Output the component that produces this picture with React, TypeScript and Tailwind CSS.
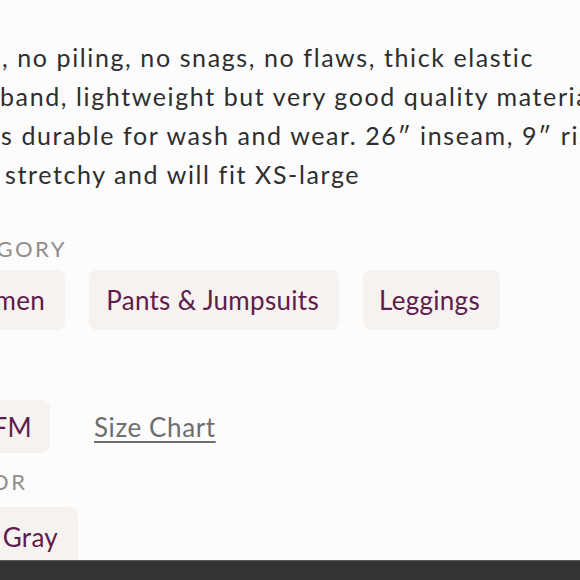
import React from "react";

const font = { fontFamily: "Lato, 'Noto Sans', sans-serif" };

function Label({ children, shift }: { children: React.ReactNode; shift: string }) {
  return (
    <div className={`${shift} text-[22px] leading-[22px] tracking-[2.5px] uppercase text-[#8e8e8e]`}>
      {children}
    </div>
  );
}

function Chip({ children, w, h = "h-[60px]" }: { children: React.ReactNode; w: string; h?: string }) {
  return (
    <div
      className={`${w} ${h} shrink-0 flex items-center justify-end pr-5 rounded-lg bg-[#f5f2ef] text-[26px] leading-none tracking-[0.3px] text-[#5f1c4c] whitespace-nowrap overflow-hidden`}
    >
      {children}
    </div>
  );
}

export default function App() {
  return (
    <div className="w-[580px] h-[580px] bg-[#fcfcfc] overflow-hidden relative" style={font}>
      <div className="ml-[-55px] w-[760px] pt-[38px]">
        <div className="text-[25px] leading-[39px] tracking-[1.6px] text-[#2e2e2e] whitespace-nowrap">
          <div className="pl-[57px]">, no piling, no snags, no flaws, thick elastic</div>
          <div className="pl-[55px]">band, lightweight but very good quality material and</div>
          <div className="pl-[56px]">s durable for wash and wear. 26″ inseam, 9″ rise</div>
          <div className="pl-[60px]">stretchy and will fit XS-large</div>
        </div>

        <div className="mt-[44px]">
          <Label shift="ml-[-12px]">Category</Label>
        </div>
        <div className="mt-[10px] flex gap-6">
          <Chip w="w-[120px]">Women</Chip>
          <Chip w="w-[250px]">Pants &amp; Jumpsuits</Chip>
          <Chip w="w-[137px]">Leggings</Chip>
        </div>

        <div className="mt-[37px]">
          <Label shift="ml-[-10px]">Size</Label>
        </div>
        <div className="mt-[11px] flex items-center">
          <Chip w="w-[105px]" h="h-[53px]">
            <span className="-mr-[2px]">OS FM</span>
          </Chip>
          <a className="ml-[44px] text-[26px] leading-none tracking-[0.6px] text-[#6e6e6e] underline underline-offset-[4px] decoration-[1.5px]">
            Size Chart
          </a>
        </div>

        <div className="mt-[18px]">
          <Label shift="ml-[-4px]">Color</Label>
        </div>
        <div className="mt-[14px] flex">
          <Chip w="w-[133px]">Gray</Chip>
        </div>
      </div>

      <div className="absolute left-0 right-0 top-[560px] h-[20px] bg-[#343434] border-t border-[#5c5c5c]" />
    </div>
  );
}
